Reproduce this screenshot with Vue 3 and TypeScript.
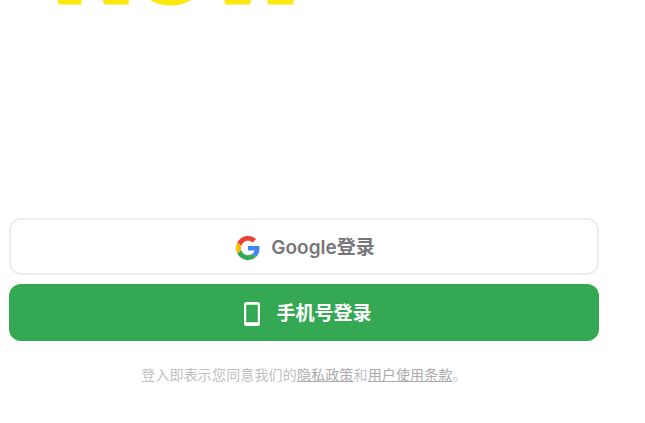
<script setup lang="ts">
const title = 'NOW'
</script>

<template>
  <main class="page">
    <div class="hero"><span class="title">{{ title }}</span></div>
    <section class="actions">
      <button class="btn google" type="button">
        <svg class="g" viewBox="0 0 48 48" aria-hidden="true">
          <path fill="#EA4335" d="M24 9.5c3.54 0 6.71 1.22 9.21 3.6l6.85-6.85C35.9 2.38 30.47 0 24 0 14.62 0 6.51 5.38 2.56 13.22l7.98 6.19C12.43 13.72 17.74 9.5 24 9.5z"/>
          <path fill="#4285F4" d="M46.98 24.55c0-1.57-.15-3.09-.38-4.55H24v9.02h12.94c-.58 2.96-2.26 5.48-4.78 7.18l7.73 6c4.51-4.18 7.09-10.36 7.09-17.65z"/>
          <path fill="#FBBC05" d="M10.53 28.59c-.48-1.45-.76-2.99-.76-4.59s.27-3.14.76-4.59l-7.98-6.19C.92 16.46 0 20.12 0 24c0 3.88.92 7.54 2.56 10.78l7.97-6.19z"/>
          <path fill="#34A853" d="M24 48c6.48 0 11.93-2.13 15.89-5.81l-7.73-6c-2.15 1.45-4.92 2.3-8.16 2.3-6.26 0-11.57-4.22-13.47-9.91l-7.98 6.19C6.51 42.62 14.62 48 24 48z"/>
        </svg>
        <span class="label">Google登录</span>
      </button>
      <button class="btn phone" type="button">
        <svg class="p" viewBox="0 0 16 24" aria-hidden="true">
          <path fill="#fff" fill-rule="evenodd" d="M2.5 0h11A2.5 2.5 0 0 1 16 2.5v19a2.5 2.5 0 0 1-2.5 2.5h-11A2.5 2.5 0 0 1 0 21.500v-19A2.500 2.500 0 0 1 2.500 0zM2.200 2.800v17.400h11.600V2.800z"/>
        </svg>
        <span class="label">手机号登录</span>
      </button>
      <p class="terms">登入即表示您同意我们的<a>隐私政策</a>和<a>用户使用条款</a>。</p>
    </section>
  </main>
</template>

<style scoped>
.page {
  width: 645px;
  height: 423px;
  overflow: hidden;
  background: #fff;
  font-family: "Inter", "Noto Sans CJK SC", sans-serif;
}
.hero {
  height: 218px;
  overflow: hidden;
  padding-left: 55px;
}
.title {
  display: block;
  margin-top: -69px;
  font-family: "Inter", sans-serif;
  font-size: 100px;
  line-height: 72px;
  font-weight: 900;
  -webkit-text-stroke: 3px #fde910;
  color: #fde910;
}
.actions {
  width: 590px;
  margin-left: 9px;
  display: flex;
  flex-direction: column;
  gap: 9px;
}
.btn {
  height: 57px;
  border-radius: 12px;
  display: flex;
  align-items: center;
  justify-content: center;
  font-family: inherit;
  font-size: 19px;
  font-weight: 600;
  padding: 2px 0 0;
}
.label { line-height: 24px; }
.google {
  background: #fff;
  border: 2px solid #eeeef1;
  color: #77777a;
  gap: 11px;
  padding-left: 3px;
}
.phone {
  background: #34a853;
  border: 0;
  color: #fff;
  gap: 16px;
  padding-left: 8px;
}
.g { width: 24px; height: 24px; }
.p { width: 16px; height: 24px; }
.terms {
  margin: 15px 0 0;
  text-align: center;
  font-size: 14px;
  letter-spacing: 0.15px;
  line-height: 20px;
  color: #c0c0c4;
}
.terms a {
  color: #aaaab0;
  text-decoration: underline;
}
</style>
